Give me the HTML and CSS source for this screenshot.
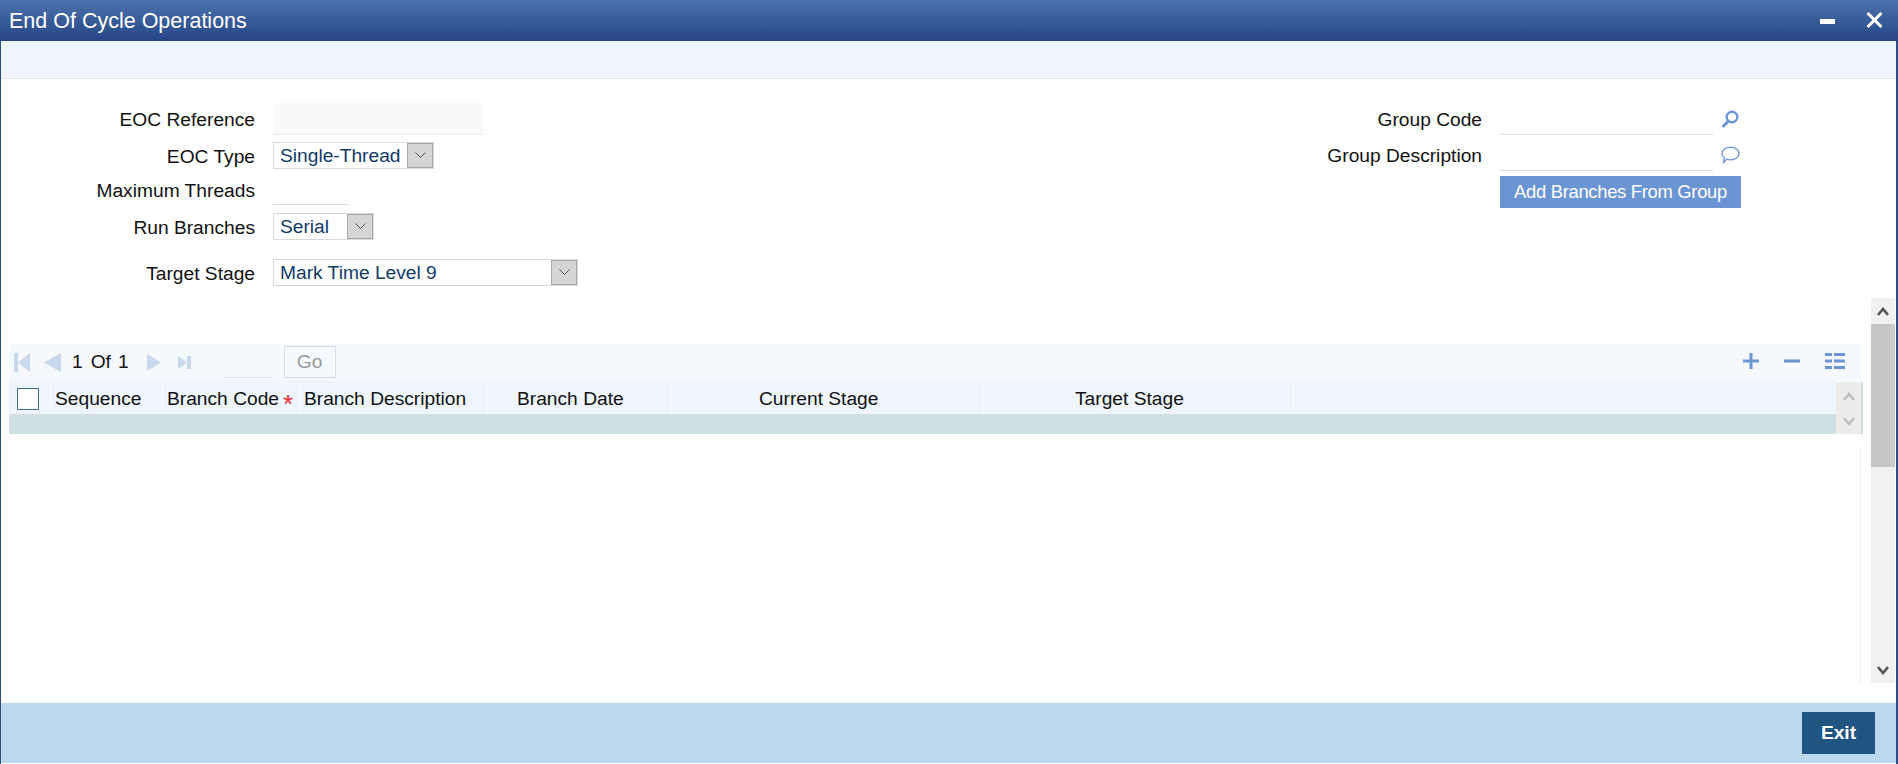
FILE: index.html
```html
<!DOCTYPE html>
<html lang="en">
<head>
<meta charset="utf-8">
<title>End Of Cycle Operations</title>
<link rel="stylesheet" href="styles.css">
</head>
<body>
<div class="window">
  <header class="titlebar">
    <h1 class="title">End Of Cycle Operations</h1>
    <div class="win-actions">
      <svg class="ico-min" viewBox="0 0 15 5"><rect width="15" height="5" fill="#fff"/></svg>
      <svg class="ico-close" viewBox="0 0 17 16"><path d="M1.500 1 15.500 15M15.500 1 1.500 15" stroke="#fff" stroke-width="3" fill="none"/></svg>
    </div>
  </header>
  <div class="toolbar"></div>
  <main class="content">
    <section class="form">
      <div class="form-left">
        <div class="row row-ref"><label class="label">EOC Reference</label><div class="input input-ref"></div></div>
        <div class="row row-select row-type"><label class="label">EOC Type</label>
          <div class="select select-type"><span class="select-value">Single-Thread</span><span class="select-btn"><svg class="chev" viewBox="0 0 11 6"><path d="M.5.5 5.500 5.500 10.500.5" fill="none" stroke="#555" stroke-width="1"/></svg></span></div></div>
        <div class="row row-threads"><label class="label">Maximum Threads</label><div class="input input-threads"></div></div>
        <div class="row row-select row-run"><label class="label">Run Branches</label>
          <div class="select select-run"><span class="select-value">Serial</span><span class="select-btn"><svg class="chev" viewBox="0 0 11 6"><path d="M.5.5 5.500 5.500 10.500.5" fill="none" stroke="#555" stroke-width="1"/></svg></span></div></div>
        <div class="row row-select row-target"><label class="label">Target Stage</label>
          <div class="select select-target"><span class="select-value">Mark Time Level 9</span><span class="select-btn"><svg class="chev" viewBox="0 0 11 6"><path d="M.5.5 5.500 5.500 10.500.5" fill="none" stroke="#555" stroke-width="1"/></svg></span></div></div>
      </div>
      <div class="form-right">
        <div class="row-r row-code"><label class="label label-r">Group Code</label><div class="input input-group"></div>
          <svg class="ico-field" viewBox="0 0 19 18"><circle cx="11" cy="7" r="5.300" fill="none" stroke="#6b96d2" stroke-width="2.400"/><path d="M7.200 11.200 2.500 16" stroke="#6b96d2" stroke-width="3" stroke-linecap="round"/></svg></div>
        <div class="row-r row-desc"><label class="label label-r">Group Description</label><div class="input input-group"></div>
          <svg class="ico-field" viewBox="0 0 19 18"><path d="M9.500 1.200C14.500 1.200 18 4 18 7.500S14.500 13.800 9.500 13.800C8 13.800 6.800 13.600 5.700 13.200L2.600 16.500 3.400 11.700C1.800 10.600 1 9.100 1 7.500 1 4 4.500 1.200 9.500 1.200Z" fill="none" stroke="#6b96d2" stroke-width="1.300"/></svg></div>
        <button class="btn-add" type="button">Add Branches From Group</button>
      </div>
    </section>
    <section class="lower">
      <div class="grid">
        <div class="pager">
          <div class="pager-left">
            <svg class="pg pg-first" viewBox="0 0 16 19"><path d="M0 0H4V19H0ZM16 0V19L4 9.500Z" fill="#c8d9ee"/></svg>
            <svg class="pg pg-prev" viewBox="0 0 17 19"><path d="M17 0V19L0 9.500Z" fill="#c8d9ee"/></svg>
            <span class="pg-num pg-cur">1</span><span class="pg-num pg-of">Of</span><span class="pg-num pg-total">1</span>
            <svg class="pg pg-next" viewBox="0 0 14 19"><path d="M0 1V18L14 9.500Z" fill="#c8d9ee"/></svg>
            <svg class="pg pg-last" viewBox="0 0 13 19"><path d="M0 3V16L9 9.500ZM9 3H13V16H9Z" fill="#c8d9ee"/></svg>
            <div class="pg-input"></div>
            <button class="btn-go" type="button">Go</button>
          </div>
          <div class="pager-right">
            <svg class="pg-tool" viewBox="0 0 16 16"><path d="M8 0V16M0 8H16" stroke="#6b96d2" stroke-width="3"/></svg>
            <svg class="pg-tool" viewBox="0 0 16 16"><path d="M0 8H16" stroke="#6b96d2" stroke-width="3"/></svg>
            <svg class="pg-tool" viewBox="0 0 20 16"><path d="M0 1.500H7M9 1.500H20M0 8H7M9 8H20M0 14.500H7M9 14.500H20" stroke="#6b96d2" stroke-width="2.800"/></svg>
          </div>
        </div>
        <div class="table-wrap">
          <div class="table">
            <div class="thead">
              <div class="th th-check"><span class="checkbox"></span></div>
              <div class="th th-seq">Sequence</div>
              <div class="th th-code">Branch Code<span class="req">*</span></div>
              <div class="th th-desc">Branch Description</div>
              <div class="th th-date">Branch Date</div>
              <div class="th th-cur">Current Stage</div>
              <div class="th th-tgt">Target Stage</div>
              <div class="th th-end"></div>
            </div>
            <div class="tr"></div>
          </div>
          <div class="table-scroll">
            <svg class="tchev" viewBox="0 0 12 9"><path d="M1 8 6 2 11 8" fill="none" stroke="#bdbdbd" stroke-width="2.400"/></svg>
            <svg class="tchev" viewBox="0 0 12 9"><path d="M1 1 6 7 11 1" fill="none" stroke="#bdbdbd" stroke-width="2.400"/></svg>
          </div>
          <div class="table-strip"></div>
        </div>
        <div class="grid-body"></div>
      </div>
      <div class="scrollbar">
        <div class="sb-btn"><svg class="schev" viewBox="0 0 12 9"><path d="M1 8 6 2 11 8" fill="none" stroke="#555" stroke-width="2.600"/></svg></div>
        <div class="sb-thumb"></div>
        <div class="sb-track"></div>
        <div class="sb-btn"><svg class="schev" viewBox="0 0 12 9"><path d="M1 1 6 7 11 1" fill="none" stroke="#555" stroke-width="2.600"/></svg></div>
      </div>
    </section>
  </main>
  <footer class="footer"><button class="btn-exit" type="button">Exit</button></footer>
</div>
</body>
</html>
```
FILE: styles.css
```css
* { box-sizing: border-box; }
html, body { margin: 0; padding: 0; height: 100%; overflow: hidden; background: #fff; }
body { font-family: "Liberation Sans", Arial, sans-serif; font-size: 19.200px; color: #111; }
button { font-family: inherit; margin: 0; border: 0; padding: 0; }

.window { width: 1898px; height: 764px; display: flex; flex-direction: column; border-left: 1px solid #2b4d88; border-right: 2px solid #2b4d88; }

.titlebar { height: 41px; margin: 0 -2px 0 -1px; padding: 0 15px 0 9px; flex: none; display: flex; align-items: center; justify-content: space-between; background: linear-gradient(#4b72aa, #264585); }
.title { margin: 0; font-size: 21.500px; font-weight: 400; color: #fff; line-height: 38px; }
.win-actions { display: flex; align-items: center; gap: 31px; }
.ico-min { width: 15px; height: 5px; margin-top: 1px; }
.ico-close { width: 17px; height: 16px; margin-top: -2px; }

.toolbar { height: 38px; flex: none; background: #eef5fd; border-bottom: 1px solid #e2e5e8; }

.content { flex: 1; min-height: 0; display: flex; flex-direction: column; }

.form { height: 219px; flex: none; display: flex; padding-top: 24px; }
.form-left { flex: 1; }
.form-right { width: 569px; padding-right: 153px; }

.row { display: flex; align-items: center; }
.label { width: 254px; padding-top: 2px; text-align: right; margin-right: 18px; flex: none; white-space: nowrap; }
.row-ref { height: 32px; }
.row-select { height: 27px; }
.row-type { margin-top: 7px; }
.row-threads { height: 30px; margin-top: 6px; }
.row-run { margin-top: 8px; }
.row-target { margin-top: 19px; }

.input { border-bottom: 1px solid #dcdcdc; }
.input-ref { width: 211px; height: 32px; background: #fafafa; border-bottom-color: #ececec; }
.input-threads { width: 76px; height: 30px; }

.select { height: 27px; display: flex; align-items: center; justify-content: space-between; border: 1px solid #d9d9d9; color: #123a68; background: #fff; }
.select-type { width: 161px; }
.select-run { width: 101px; }
.select-target { width: 305px; }
.select-value { padding-left: 6px; }
.select-btn { width: 26px; height: 25px; display: flex; align-items: center; justify-content: center; background: #d5d5d5; border: 1px solid #a8a8a8; }
.chev { width: 11px; height: 6px; margin-top: -2px; }

.row-r { display: flex; align-items: center; height: 32px; }
.row-desc { margin-top: 4px; }
.label-r { width: 155px; }
.input-group { width: 213px; height: 32px; flex: none; }
.ico-field { width: 19px; height: 18px; margin-left: 8px; flex: none; }
.btn-add { display: block; width: 241px; height: 32px; margin-top: 5px; margin-left: 173px; background: #6a95d2; color: #fff; font-size: 18.400px; letter-spacing: -.3px; }

.lower { height: 385px; flex: none; display: flex; }
.grid { width: 1854px; margin-left: 8px; padding-top: 46px; flex: none; display: flex; flex-direction: column; }
.pager { height: 37px; width: 1852px; background: #f5f9fe; display: flex; justify-content: space-between; align-items: center; }
.pager-left { display: flex; align-items: center; height: 37px; }
.pg { height: 19px; flex: none; }
.pg-first { width: 16px; margin-left: 5px; }
.pg-prev { width: 17px; margin-left: 14px; }
.pg-next { width: 14px; margin-left: 18px; }
.pg-last { width: 13px; margin-left: 17px; }
.pg-num { color: #111; margin-top: -2px; }
.pg-cur { margin-left: 11px; }
.pg-of { margin-left: 8px; }
.pg-total { margin-left: 7px; }
.pg-input { width: 50px; height: 32px; margin-left: 32px; margin-top: -2px; border-bottom: 1px solid #dfe3e8; }
.btn-go { width: 52px; height: 32px; margin-left: 11px; margin-top: -2px; background: transparent; border: 1px solid #d6dce3; color: #999; font-size: 19.200px; }
.pager-right { display: flex; align-items: center; gap: 25px; padding-right: 16px; margin-top: -3px; }
.pg-tool { height: 16px; width: 16px; flex: none; }
.pg-tool:last-child { width: 20px; }

.table-wrap { display: flex; height: 53px; }
.table { width: 1827px; flex: none; display: flex; flex-direction: column; }
.thead { height: 33px; display: flex; background: #eef5fd; }
.th { height: 33px; line-height: 31px; padding-top: 2px; flex: none; border-right: 1px solid #f8fbff; white-space: nowrap; }
.th-check { width: 42px; display: flex; align-items: center; padding: 2px 0 0 8px; }
.checkbox { width: 22px; height: 22px; border: 1px solid #3d7199; background: #fff; }
.th-seq { width: 112px; padding-left: 4px; }
.th-code { width: 137px; padding-left: 4px; }
.th-desc { width: 188px; padding-left: 4px; }
.th-date { width: 184px; padding-left: 29px; }
.th-cur { width: 312px; padding-left: 87px; }
.th-tgt { width: 310px; padding-left: 91px; }
.th-end { flex: 1; border-right: 0; }
.req { color: #ee2a33; margin-left: 4px; font-size: 26px; line-height: 0; vertical-align: -8px; }
.tr { height: 20px; background: #cfdfe2; }
.table-scroll { width: 25px; height: 52px; margin-top: 1px; background: #ececec; display: flex; flex-direction: column; align-items: center; justify-content: space-between; padding: 10px 0 8px; }
.tchev { width: 12px; height: 9px; }
.table-strip { width: 2px; height: 52px; margin-top: 1px; background: #cfdfe2; }
.grid-body { flex: 1; width: 1852px; margin-top: 14px; border-right: 1px solid #f0f0f0; }

.scrollbar { width: 24px; margin-left: 8px; flex: none; display: flex; flex-direction: column; background: #f0f0f0; }
.sb-btn { height: 26px; display: flex; align-items: center; justify-content: center; flex: none; }
.schev { width: 12px; height: 9px; }
.sb-thumb { height: 143px; flex: none; background: linear-gradient(to right, #c6c6c6 80%, #cdcdcd 80%); }
.sb-track { flex: 1; }

.footer { margin-top: 20px; height: 60px; flex: none; margin-bottom: 1px; display: flex; align-items: center; justify-content: flex-end; padding-right: 21px; background: #bcd8ee; }
.btn-exit { width: 73px; height: 42px; background: #1f5580; color: #fff; font-weight: 700; font-size: 19.200px; }
```
